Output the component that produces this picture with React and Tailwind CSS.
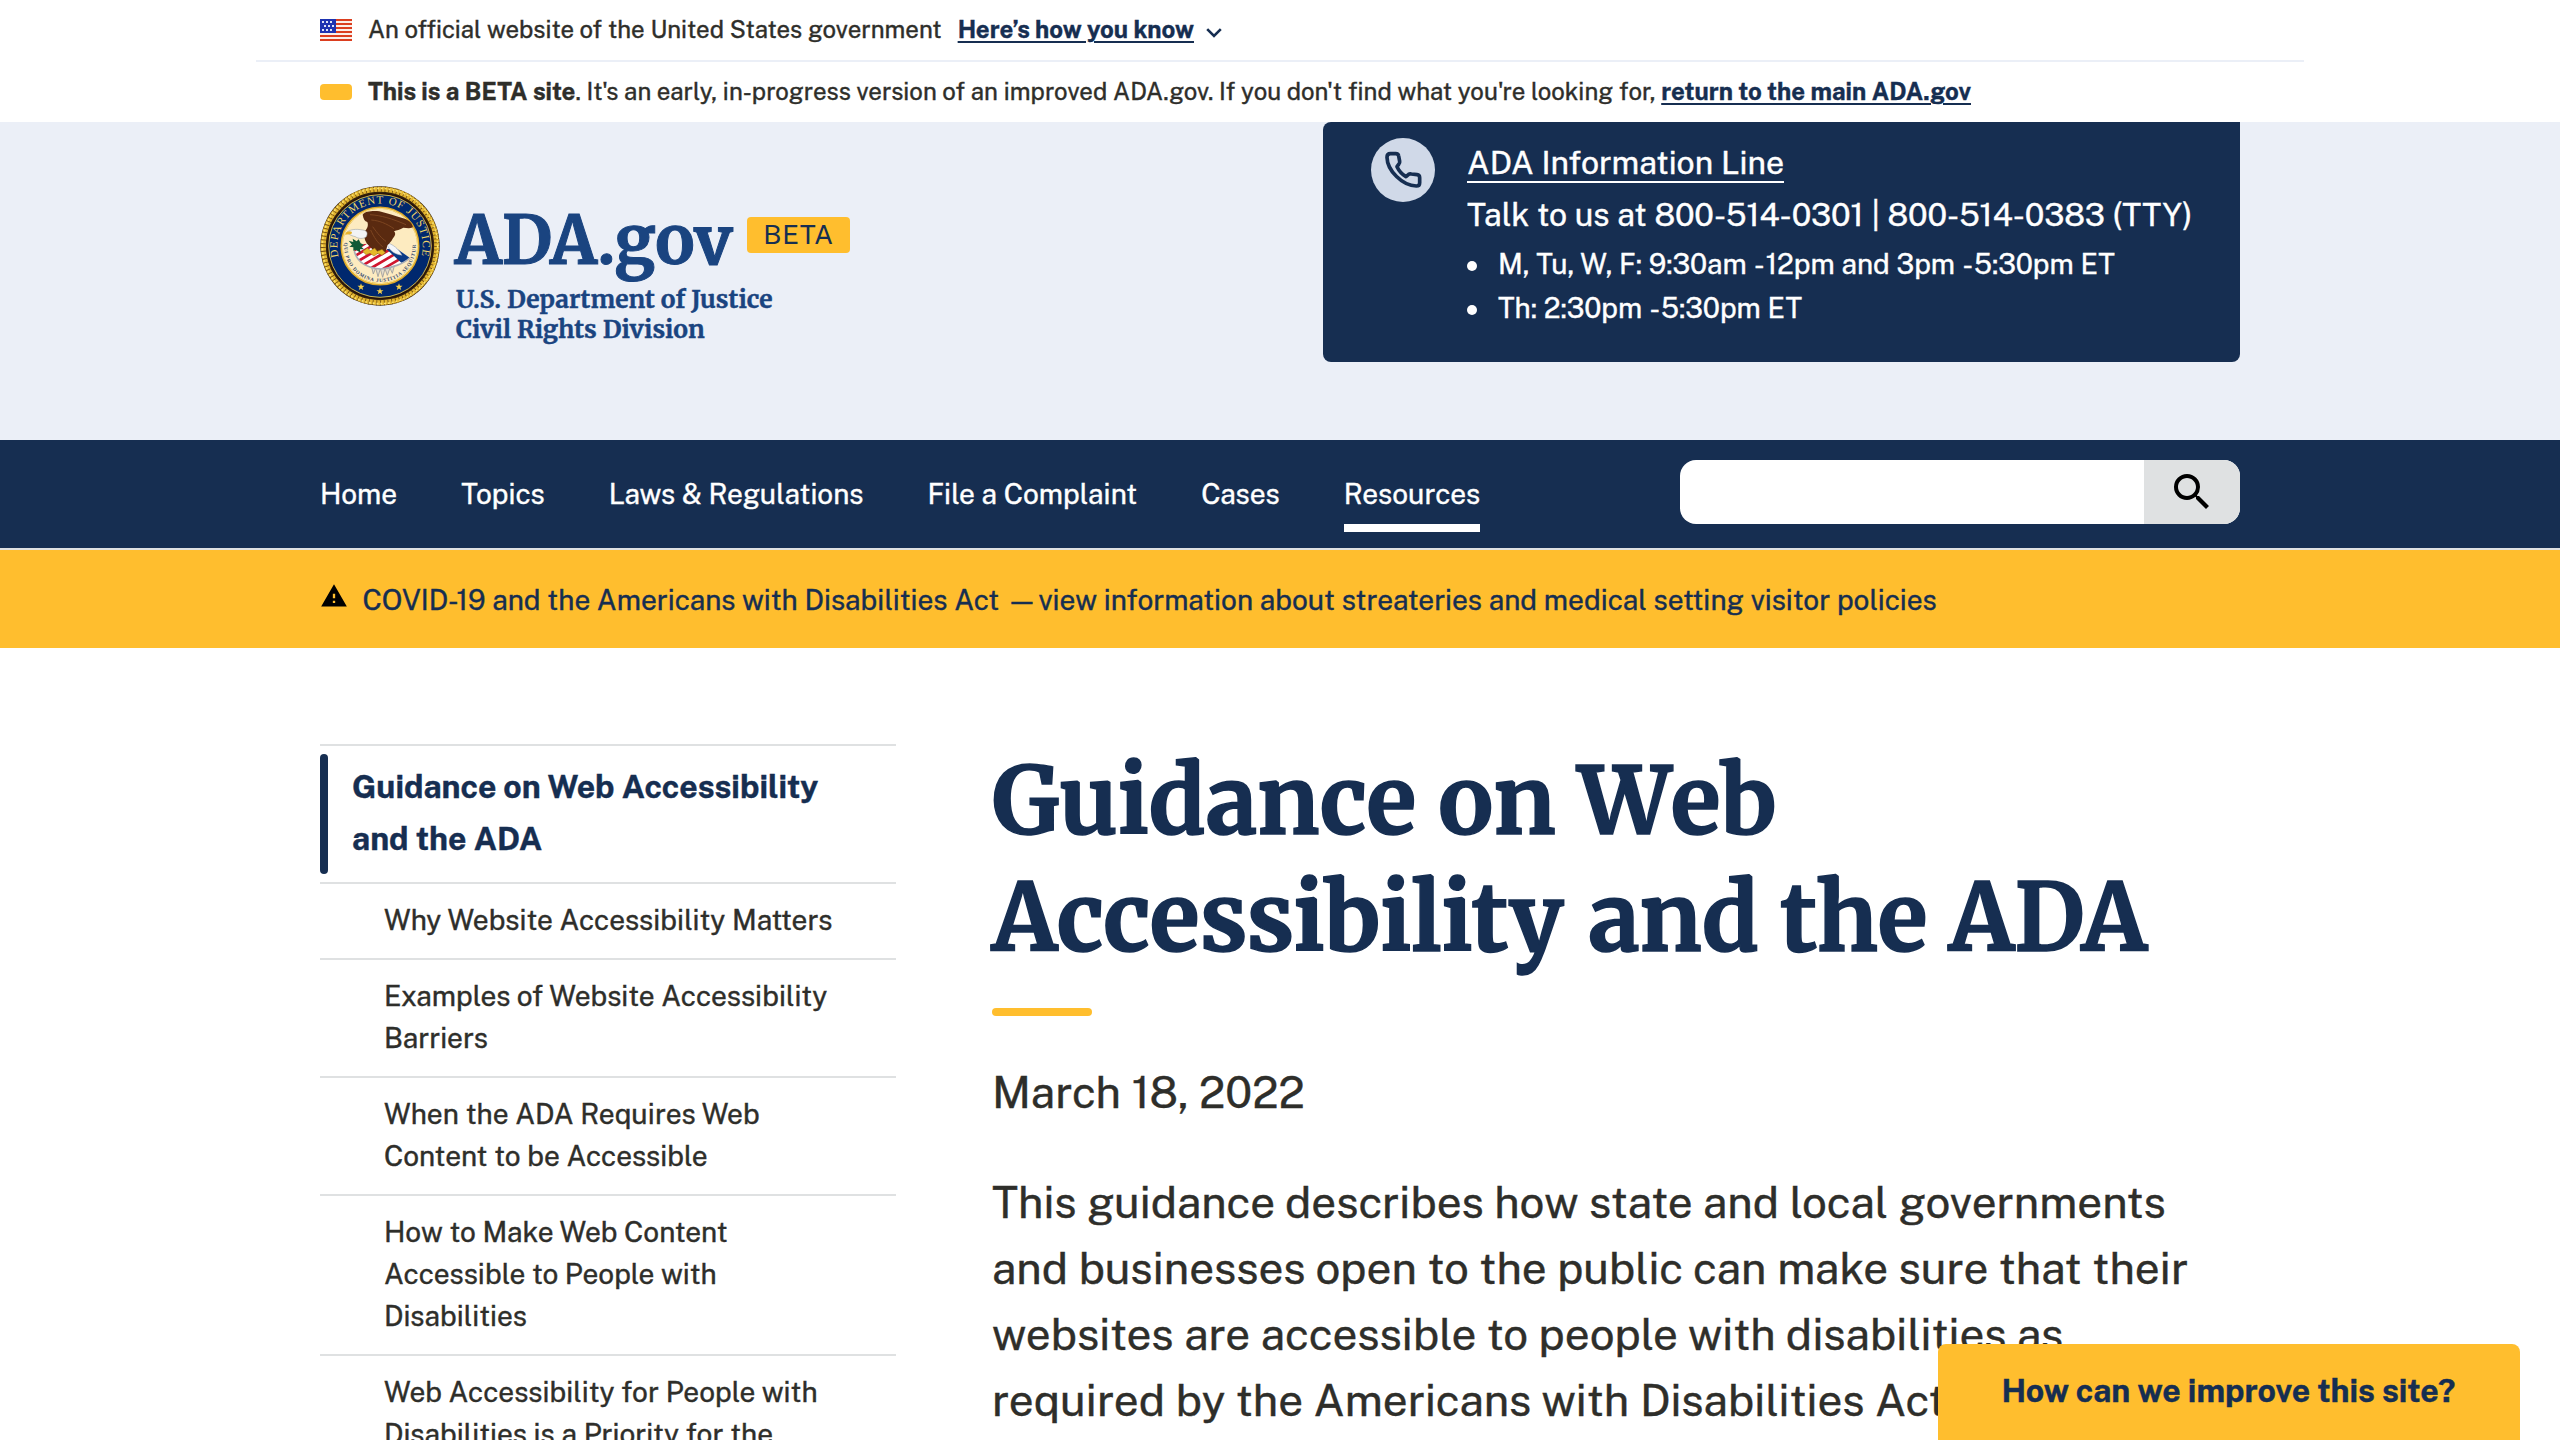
import React from "react";
import { MdSearch, MdWarning } from "react-icons/md";

const SANS = "font-['Public_Sans','Inter',sans-serif] [-webkit-text-stroke-width:0.4px]";
const SERIF = "font-['Merriweather','DejaVu_Serif_Condensed',serif]";

function Flag() {
  return (
    <svg viewBox="0 0 32 22" className="h-[22px] w-8" shapeRendering="crispEdges">
      <rect width="32" height="22" fill="#fbeee9" />
      {[0, 4, 8, 12, 16, 20].map((y) => (
        <rect key={y} y={y} width="32" height="2" fill="#db3e1f" />
      ))}
      <rect width="16" height="14" fill="#1e33b1" />
      {[2, 6, 10].map((y) =>
        [2, 6, 10].map((x) => (
          <rect key={`${x}-${y}`} x={y === 6 ? x + 2 : x} y={y} width="2" height="2" fill="#dfe3f7" />
        ))
      )}
    </svg>
  );
}

function Star({ x, y }) {
  return (
    <path
      transform={`translate(${x} ${y})`}
      d="M0 -11L2.7 -3.6L10.5 -3.4L4.3 1.4L6.5 8.9L0 4.5L-6.5 8.9L-4.3 1.4L-10.5 -3.4L-2.7 -3.6Z"
      fill="#f7d04a"
    />
  );
}

function Seal() {
  return (
    <svg viewBox="18 18 360 360" className="h-[120px] w-[120px] shrink-0">
      <defs>
        <path id="name-arc" d="M74.3 231.1A128 128 0 1 1 321.7 231.1" />
        <path id="motto-arc" d="M91 188A107.5 107.5 0 1 0 305 188" />
        <clipPath id="shield">
          <path d="M120 212L150 192L225 190L287 233C270 250 235 264 200 266C160 264 130 247 120 212Z" />
        </clipPath>
      </defs>
      <circle cx="198" cy="198" r="179" fill="#33230f" />
      <circle cx="198" cy="198" r="170" fill="none" stroke="#e3b52f" strokeWidth="15" />
      <circle cx="198" cy="198" r="170.5" fill="none" stroke="#6d4a10" strokeWidth="16" strokeDasharray="2.5 9" />
      <circle cx="198" cy="198" r="173" fill="none" stroke="#fbe06a" strokeWidth="5" strokeDasharray="6 5.5" />
      <circle cx="198" cy="198" r="159" fill="#2a1208" />
      <circle cx="198" cy="198" r="154" fill="#00286e" stroke="#f1d34c" strokeWidth="2.5" />
      <circle cx="198" cy="198" r="115" fill="#fdebc0" stroke="#dda92a" strokeWidth="7" />
      <circle cx="198" cy="198" r="113" fill="none" stroke="#fbe28a" strokeWidth="3" />
      <text fontSize="33" fill="#f0d566" className="font-['Liberation_Serif',serif] [-webkit-text-stroke-width:0.7px]">
        <textPath href="#name-arc" textLength="464" lengthAdjust="spacing">DEPARTMENT OF JUSTICE</textPath>
      </text>
      <path
        d="M172 258L178 282L185 264L192 290L199 266L206 292L213 266L220 286L228 264L235 280L242 254Z"
        fill="#e3dccb"
        stroke="#9b9b9b"
        strokeWidth="2.5"
      />
      <text fontSize="15" fill="#33486a" className="font-['Liberation_Serif',serif] font-bold [-webkit-text-stroke-width:0]">
        <textPath href="#motto-arc" textLength="352" lengthAdjust="spacing">QUI PRO DOMINA JUSTITIA SEQUITUR</textPath>
      </text>
      <Star x={141} y={321} />
      <Star x={198} y={334} />
      <Star x={255} y={321} />
      <g clipPath="url(#shield)">
        <rect x="110" y="185" width="185" height="90" fill="#ffffff" />
        <g stroke="#d0162f" strokeWidth="8">
          <path d="M112 216L160 186M116 232L190 188M128 246L205 200M146 256L225 210M172 264L240 224M205 268L256 238" />
        </g>
        <path d="M218 208L300 196L300 240L262 248Z" fill="#0b3a86" />
      </g>
      <path d="M121 214C130 247 160 264 200 267C236 264 270 250 287 234" fill="none" stroke="#a9adb5" strokeWidth="5" />
      <path d="M217 188C222 206 236 222 264 226C254 206 236 192 217 188Z" fill="#f4f6fa" stroke="#8c97ac" strokeWidth="1.5" />
      <path
        d="M146 104C152 94 176 92 196 94L218 100C240 106 256 112 272 116C288 122 296 132 297 142C286 147 278 144 268 143C258 150 248 150 240 154C246 160 244 168 236 176C232 184 226 190 220 196C217 210 216 216 210 222L200 214L190 222C182 214 168 202 158 190C150 178 150 166 152 154C160 146 164 136 160 126C152 124 148 116 146 104Z"
        fill="#5a2a10"
      />
      <path d="M168 104C200 106 235 116 276 134M172 120C196 122 216 130 240 146M170 150C180 172 192 190 206 200M176 140C190 160 204 176 216 184" fill="none" stroke="#7d4520" strokeWidth="3" />
      <path d="M98 158C106 148 126 146 146 150C160 152 162 160 157 170C148 178 132 176 124 170C116 168 108 166 98 158Z" fill="#f2f4f5" stroke="#8d9496" strokeWidth="1.5" />
      <path d="M93 164C96 154 106 152 114 156L112 163C104 162 98 163 93 164Z" fill="#e9b42c" />
      <path d="M104 182L118 186L116 176L128 184L134 178L140 190L150 194L142 200L150 208L138 208L140 218L126 210L118 212L118 202L106 200L114 194Z" fill="#125a36" />
      <path d="M146 214L160 204L170 212L182 204L190 214L204 208L214 218L204 226L192 220L180 228L168 220L156 224Z" fill="#e6b829" stroke="#8a6210" strokeWidth="1.5" />
    </svg>
  );
}

function PhoneIcon() {
  return (
    <svg viewBox="33 39 192 192" className="h-16 w-16 shrink-0">
      <circle cx="129" cy="135" r="96" fill="#d0d9e8" />
      <path
        d="M91 86H107Q115 86 116 93L119 109Q120 114 116 118L111 125Q120 144 138 155L146 148Q149 146 154 147L171 149Q179 150 179 158V173Q179 183 169 183C127 182 82 137 81 97Q81 86 91 86Z"
        fill="none"
        stroke="#162e51"
        strokeWidth="11"
        strokeLinejoin="round"
      />
    </svg>
  );
}

function GovBanner() {
  return (
    <div className="mx-auto flex h-[62px] w-[2048px] items-center border-b-2 border-[#ebeff7] px-16 text-2xl">
      <Flag />
      <span className="mb-0.5 ml-4 tracking-[0.01px]">An official website of the United States government</span>
      <a className="mb-0.5 ml-4 font-bold text-[#162e51] underline decoration-2 underline-offset-[3px]">Here’s how you know</a>
      <svg viewBox="0 0 16 10" className="mt-1.5 ml-3 h-[10px] w-4" fill="none" stroke="#162e51" strokeWidth="2.6">
        <path d="M1.2 1.2L8 8L14.8 1.2" />
      </svg>
    </div>
  );
}

function BetaBanner() {
  return (
    <div className="mx-auto flex h-[60px] w-[1920px] items-center text-2xl">
      <div className="h-4 w-8 rounded bg-[#ffbe2e]" />
      <p className="mb-0.5 ml-4 tracking-[0.01px]">
        <b>This is a BETA site</b>. It's an early, in-progress version of an improved ADA.gov. If you don't find what
        you're looking for, <a className="font-bold text-[#162e51] underline decoration-2 underline-offset-[3px]">return to the main ADA.gov</a>
      </p>
    </div>
  );
}

function Bullet({ children }) {
  return (
    <li className="flex items-center">
      <span className="mt-[3px] mr-[21px] h-[10px] w-[10px] rounded-full bg-white" />
      <span>{children}</span>
    </li>
  );
}

function Dash() {
  return <span className="mr-px ml-[0.5px]">-</span>;
}

function Header() {
  return (
    <header className="h-[318px] bg-[#ebeff7]">
      <div className="mx-auto flex w-[1920px] items-start justify-between">
        <div className="mt-16 flex items-start">
          <Seal />
          <div className="mt-[11px] ml-[15px] text-[#1a4480]">
            <div className="flex items-start">
              <span className={`${SERIF} w-[292px] text-[66px] leading-[87px] font-bold [-webkit-text-stroke-width:1px]`}>ADA.gov</span>
              <span className="mt-[20px] flex h-9 w-[103px] items-center justify-center rounded bg-[#ffbe2e] pb-0.5 text-[27px] tracking-[0.5px] text-[#162e51] [-webkit-text-stroke-width:0]">
                BETA
              </span>
            </div>
            <p className={`${SERIF} mt-px ml-px text-[24.6px] leading-[30px] font-bold tracking-[0.04px]`}>
              U.S. Department of Justice
              <br />
              Civil Rights Division
            </p>
          </div>
        </div>
        <div className="flex h-60 w-[917px] rounded-lg rounded-tr-none bg-[#162e51] pt-[15px] pl-12 text-white">
          <div className="mt-px">
            <PhoneIcon />
          </div>
          <div className="ml-8 whitespace-nowrap">
            <p className="text-[32px] leading-[52px]">
              <a className="border-b-2 border-white">ADA Information Line</a>
            </p>
            <p className="text-[32px] leading-[52px]">Talk to us at 800-514-0301 | 800-514-0383 (TTY)</p>
            <ul className="mt-[1px] text-[28px] leading-[44px]">
              <Bullet>
                M, Tu, W, F: 9:30am <Dash />12pm and 3pm <Dash />5:30pm ET
              </Bullet>
              <Bullet>
                Th: 2:30pm <Dash />5:30pm ET
              </Bullet>
            </ul>
          </div>
        </div>
      </div>
    </header>
  );
}

function Nav() {
  return (
    <nav className="h-[110px] border-b-2 border-[#dfe1e2] bg-[#162e51]">
      <div className="mx-auto flex w-[1920px] justify-between">
        <div className="mt-4 flex h-[76px] gap-[64.1px] text-[28px] leading-[60px] text-white">
          {["Home", "Topics", "Laws & Regulations", "File a Complaint", "Cases"].map((t) => (
            <a key={t} className="border-y-8 border-transparent">{t}</a>
          ))}
          <a className="border-y-8 border-t-transparent border-b-white">Resources</a>
        </div>
        <div className="mt-5 flex h-16 w-[560px] overflow-hidden rounded-2xl bg-white">
          <div className="ml-auto flex w-24 items-center justify-center bg-[#dfe1e2]">
            <MdSearch className="h-12 w-12 text-black" />
          </div>
        </div>
      </div>
    </nav>
  );
}

function Notice() {
  return (
    <div className="h-[98px] bg-[#ffbe2e]">
      <div className="mx-auto flex h-full w-[1920px] items-center text-[28px] text-[#162e51]">
        <MdWarning className="mb-1.5 h-7 w-7 text-black" />
        <p className="mt-0.5 ml-[14.5px] whitespace-pre">
          COVID-19 and the Americans with Disabilities Act<span className="ml-[7px]">—</span>
          <span className="ml-px">view information about streateries and medical setting visitor policies</span>
        </p>
      </div>
    </div>
  );
}

const LINKS = [
  ["Why Website Accessibility Matters"],
  ["Examples of Website Accessibility", "Barriers"],
  ["When the ADA Requires Web", "Content to be Accessible"],
  ["How to Make Web Content", "Accessible to People with", "Disabilities"],
  ["Web Accessibility for People with", "Disabilities is a Priority for the"],
];

function Sidebar() {
  return (
    <aside className="mt-0.5 w-[576px]">
      <div className="flex h-[138px] border-t-2 border-[#dfe1e2] py-2">
        <div className="h-[120px] w-2 rounded bg-[#162e51]" />
        <p className="mt-[7px] ml-6 text-[32px] leading-[52px] font-bold text-[#162e51]">
          Guidance on Web Accessibility
          <br />
          and the ADA
        </p>
      </div>
      {LINKS.map((lines) => (
        <div key={lines[0]} className="border-t-2 border-[#dfe1e2] pt-[15px] pb-[17px] pl-16 text-[28px] leading-[42px]">
          {lines.map((l) => (
            <div key={l}>{l}</div>
          ))}
        </div>
      ))}
    </aside>
  );
}

function Article() {
  return (
    <main className="mt-px ml-24 w-[1248px] whitespace-nowrap">
      <h1 className={`${SERIF} text-[92px] leading-[116.6px] font-bold text-[#162e51] [-webkit-text-stroke-width:1.5px]`}>
        <span className="tracking-[0.1px]">Guidance on </span>
        <span className="tracking-[-0.5px]">W</span>eb
        <br />
        Accessibility <span className="ml-[3px] tracking-[-0.15px]">and the ADA</span>
      </h1>
      <div className="mt-8 h-2 w-[100px] rounded bg-[#ffbe2e]" />
      <p className="mt-[43px] text-[44px] leading-[66px]">March 18, 2022</p>
      <p className="mt-11 text-[44px] leading-[66px]">
        This guidance describes how state and local governments
        <br />
        and businesses open to the public can make sure that their
        <br />
        websites are accessible to people with disabilities as
        <br />
        required by the Americans with Disabilities Act
      </p>
    </main>
  );
}

export default function App() {
  return (
    <div className={`${SANS} relative h-[1440px] w-[2560px] overflow-hidden bg-white text-[#2e2e2a]`}>
      <GovBanner />
      <BetaBanner />
      <Header />
      <Nav />
      <Notice />
      <div className="mx-auto flex w-[1920px] items-start pt-[94px]">
        <Sidebar />
        <Article />
      </div>
      <button className="absolute right-10 bottom-0 h-24 w-[582px] rounded-t-lg bg-[#ffbe2e] pr-px pb-0.5 text-[32px] font-bold text-[#162e51]">
        How can we improve this site?
      </button>
    </div>
  );
}
